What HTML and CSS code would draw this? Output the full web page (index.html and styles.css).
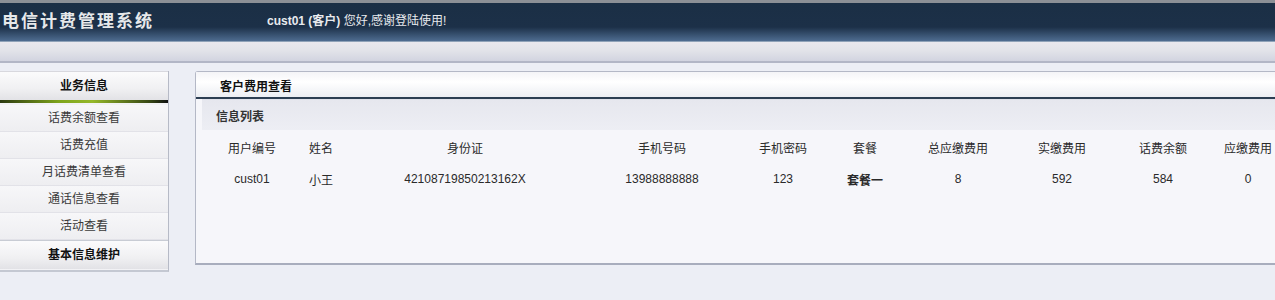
FILE: index.html
```html
<!DOCTYPE html>
<html lang="zh-CN">
<head>
    <meta charset="UTF-8">
    <title>电信计费管理系统</title>
    <link rel="stylesheet" href="styles.css">
</head>
<body>
    <!--顶部标题栏-->
    <div class="top">
        <div class="logo">电信计费管理系统</div>
        <div class="welcome"><b>cust01 (客户)</b> 您好,感谢登陆使用!</div>
    </div>
    <div class="nav"></div>

    <div class="wrap">
        <!--左侧菜单-->
        <div class="side">
            <div class="side-title">业务信息</div>
            <div class="side-bar"></div>
            <ul class="menu">
                <li>话费余额查看</li>
                <li>话费充值</li>
                <li>月话费清单查看</li>
                <li>通话信息查看</li>
                <li>活动查看</li>
            </ul>
            <div class="side-title side-bottom">基本信息维护</div>
        </div>

        <!--右侧内容-->
        <div class="main">
            <div class="main-title">客户费用查看</div>
            <div class="sub-title">信息列表</div>
            <table class="list">
                <tr class="head">
                    <td class="c1">用户编号</td>
                    <td class="c2">姓名</td>
                    <td class="c3">身份证</td>
                    <td class="c4">手机号码</td>
                    <td class="c5">手机密码</td>
                    <td class="c6">套餐</td>
                    <td class="c7">总应缴费用</td>
                    <td class="c8">实缴费用</td>
                    <td class="c9">话费余额</td>
                    <td class="c10">应缴费用</td>
                </tr>
                <tr>
                    <td>cust01</td>
                    <td>小王</td>
                    <td>42108719850213162X</td>
                    <td>13988888888</td>
                    <td>123</td>
                    <td class="bold">套餐一</td>
                    <td>8</td>
                    <td>592</td>
                    <td>584</td>
                    <td>0</td>
                </tr>
            </table>
        </div>
    </div>
</body>
</html>
```

FILE: styles.css
```css
*{
    padding: 0;
    margin: 0;
    list-style: none;
}
body{
    width: 1275px;
    height: 300px;
    overflow: hidden;
    background: #eceef5;
    font-family: "Liberation Sans", "Noto Sans CJK SC", sans-serif;
    font-size: 12px;
    color: #2a2a2a;
}
.top{
    height: 38px;
    border-top: 3px solid #8c9096;
    border-bottom: 1px solid #8fa2b8;
    background: linear-gradient(#1b2f45 0, #1c3048 24px, #4e6c90 38px);
    display: flex;
    align-items: center;
}
.logo{
    width: 265px;
    padding-left: 2px;
    padding-bottom: 6px;
    font-size: 17px;
    font-weight: bold;
    letter-spacing: 2px;
    color: #e6e8ea;
}
.welcome{
    padding-bottom: 6px;
    font-size: 12px;
    color: #e8eaee;
}
.nav{
    height: 19px;
    border-bottom: 2px solid #b2b6c6;
    background: linear-gradient(#e9e8ee, #e2e3e9 45%, #d2d4e0);
}
.wrap{
    display: flex;
    gap: 26px;
    padding-top: 8px;
}
.side{
    flex-shrink: 0;
    width: 168px;
    height: 199px;
    border-right: 1px solid #b6bac6;
    border-bottom: 2px solid #c4c8d2;
    background: #f2f2f5;
}
.side-title{
    height: 28px;
    line-height: 28px;
    text-align: center;
    font-weight: bold;
    color: #111;
    border-top: 1px solid #d8d8de;
    background: linear-gradient(#fbfbfc, #f0f0f2 60%, #e2e2e6);
}
.side-bar{
    height: 3px;
    background: linear-gradient(90deg, #2c3a10, #7ea41c 35%, #95b82a 55%, #344414 90%, #111);
}
.menu{
    padding-top: 2px;
}
.menu li{
    height: 26px;
    line-height: 26px;
    text-align: center;
    color: #3a3a3a;
    border-bottom: 1px solid #e2e2e8;
    background: linear-gradient(#f7f7f9, #eeeef1);
}
.side-bottom{
    margin-top: 0;
    border-top: 1px solid #c8ccd4;
}
.main{
    flex-shrink: 0;
    width: 1120px;
    height: 191px;
    border: 1px solid #b4b8c6;
    border-bottom: 2px solid #a8adbd;
    border-radius: 3px 0 0 0;
    background: #f6f6fa;
}
.main-title{
    height: 25px;
    line-height: 30px;
    padding-left: 24px;
    font-weight: bold;
    color: #111;
    border-bottom: 2px solid #2c3e52;
    background: linear-gradient(#f4f4f7, #ffffff 40%, #eceef3);
}
.sub-title{
    height: 30px;
    line-height: 34px;
    margin-left: 6px;
    padding-left: 14px;
    font-weight: bold;
    color: #333;
    border-top: 1px solid #dfe1ea;
    background: linear-gradient(#e6e7ee, #edeef4);
}
.list{
    border-collapse: collapse;
    margin-left: 14px;
}
.list td{
    height: 30px;
    text-align: center;
    white-space: nowrap;
    color: #2a2a2a;
}
.list .head td{
    height: 34px;
}
.list .bold{
    font-weight: bold;
}
.c1{ width: 84px; }
.c2{ width: 54px; }
.c3{ width: 234px; }
.c4{ width: 160px; }
.c5{ width: 82px; }
.c6{ width: 82px; }
.c7{ width: 104px; }
.c8{ width: 104px; }
.c9{ width: 98px; }
.c10{ width: 72px; }
```
